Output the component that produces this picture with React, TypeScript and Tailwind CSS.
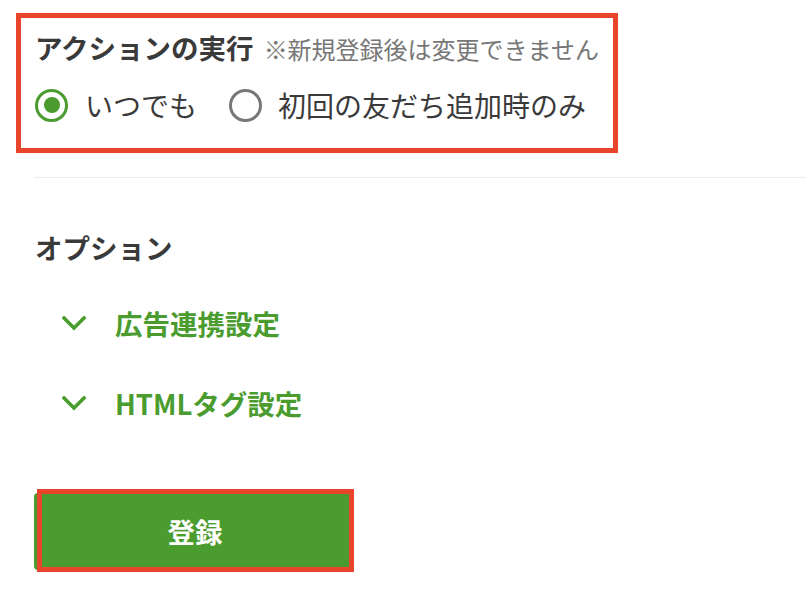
import React from "react";

const GREEN = "#4a9c2f";

function Chevron() {
  return (
    <svg width="24" height="15" viewBox="0 0 24 15" fill="none">
      <path d="M2 2 L12 12 L22 2" stroke={GREEN} strokeWidth="3.6" strokeLinecap="square" strokeLinejoin="miter" />
    </svg>
  );
}

export default function App() {
  return (
    <div
      className="w-[806px] h-[595px] bg-white overflow-hidden text-[#3a3a3a]"
      style={{ fontFamily: '"Noto Sans CJK JP", "Noto Sans", sans-serif' }}
    >
      <div className="pt-[13px] pl-[16px]">
        <div className="w-[602px] h-[140px] border-[5px] border-[#e8452c] pl-[14px] pt-[9px]">
          <div className="flex items-baseline h-[40px] leading-[40px]">
            <span className="text-[27.5px] font-bold text-[#3a3a3a]">アクションの実行</span>
            <span className="ml-[10px] text-[24px] text-[#777]">※新規登録後は変更できません</span>
          </div>
          <div className="mt-[18px] flex items-center h-[40px]">
            <span className="w-[33px] h-[33px] rounded-full border-[3px] border-[#4a9c2f] flex items-center justify-center">
              <span className="w-[16px] h-[16px] rounded-full bg-[#4a9c2f]" />
            </span>
            <span className="ml-[17px] text-[28px] leading-[40px]">いつでも</span>
            <span className="ml-[32px] w-[33px] h-[33px] rounded-full border-[3px] border-[#777]" />
            <span className="ml-[16px] text-[28px] leading-[40px]">初回の友だち追加時のみ</span>
          </div>
        </div>
      </div>
      <div className="mt-[24px] ml-[34px] h-px bg-[#ececec]" />
      <div className="pl-[35px]">
        <div className="mt-[49px] text-[27.5px] font-bold leading-[40px]">オプション</div>
        <div className="mt-[36px] flex items-center h-[40px] pl-[27px]">
          <Chevron />
          <span className="ml-[29px] text-[27.5px] font-bold text-[#4a9c2f] leading-[40px]">広告連携設定</span>
        </div>
        <div className="mt-[40px] flex items-center h-[40px] pl-[27px]">
          <Chevron />
          <span className="ml-[29px] text-[27.5px] font-bold text-[#4a9c2f] leading-[40px]">HTMLタグ設定</span>
        </div>
      </div>
      <div className="mt-[70px] ml-[34px] relative w-[316px] h-[77px]">
        <button className="w-full h-full rounded-[4px] bg-[#4a9c2f] text-white text-[27.5px] font-bold flex items-center justify-center pl-[6px]">
          登録
        </button>
        <div className="absolute left-[3px] top-[-4px] w-[317px] h-[83px] border-[5px] border-[#e8452c] pointer-events-none" />
      </div>
    </div>
  );
}
